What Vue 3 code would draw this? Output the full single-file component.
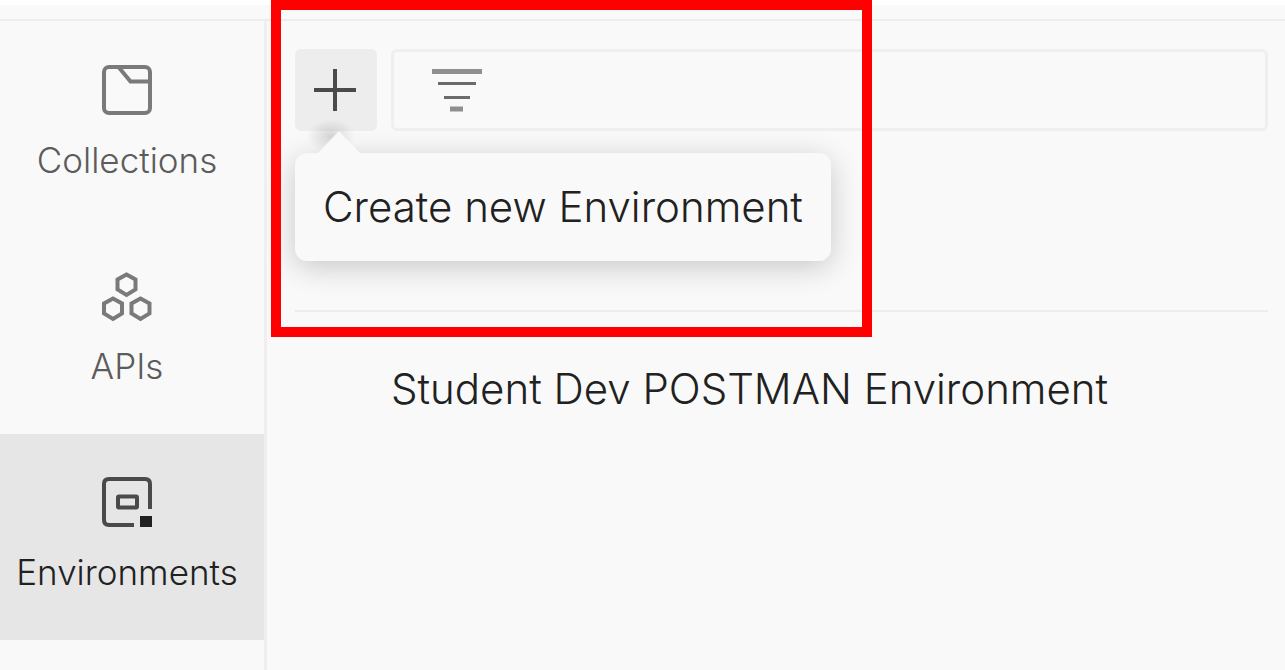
<script setup>
import { ref } from 'vue'

const filter = ref('')
const active = ref('Environments')
const sections = ['Collections', 'APIs', 'Environments']
const environments = ['Student Dev POSTMAN Environment']
</script>

<template>
  <div class="app">
    <header class="topbar"></header>
    <div class="body">
      <nav class="sidebar" aria-label="Workspace">
        <button
          v-for="name in sections"
          :key="name"
          type="button"
          class="section"
          :class="{ active: name === active }"
          @click="active = name"
        >
          <svg v-if="name === 'Collections'" class="icon" viewBox="0 0 52 52" aria-hidden="true">
            <rect x="3" y="3" width="46" height="46" rx="5" />
            <path d="M17.500 3L29.500 17.500H49" />
          </svg>
          <svg v-else-if="name === 'APIs'" class="icon" viewBox="0 0 52 52" aria-hidden="true">
            <path d="M25.500 4.500L34.500 9.500V19.500L25.500 25L16.500 19.500V9.500Z" />
            <path d="M12 28.500L21 33.500V43.500L12 49L3 43.500V33.500Z" />
            <path d="M39.500 28.500L48.500 33.500V43.500L39.500 49L30.500 43.500V33.500Z" />
          </svg>
          <svg v-else class="icon" viewBox="0 0 52 52" aria-hidden="true">
            <path d="M33 49H8Q3 49 3 44V8Q3 3 8 3H44Q49 3 49 8V33" />
            <rect x="17" y="20.500" width="19" height="11" rx="1" />
            <rect class="solid" x="39" y="40" width="12" height="11" />
          </svg>
          <span>{{ name }}</span>
        </button>
      </nav>

      <main class="panel">
        <div class="toolbar">
          <div class="create">
            <button type="button" class="add" aria-label="Create new Environment" aria-describedby="create-tip">
              <svg viewBox="0 0 82 82" aria-hidden="true">
                <path d="M19 41H61M40 20V62" />
              </svg>
            </button>
            <div id="create-tip" class="tooltip" role="tooltip">Create new Environment</div>
          </div>
          <div class="search">
            <svg class="funnel" viewBox="0 0 50 44" aria-hidden="true">
              <path class="wide" d="M0 3.500H50" />
              <path d="M6 15.500H44M12 29.500H38" />
              <path class="wide" d="M18 41H31" />
            </svg>
            <input v-model="filter" type="text" aria-label="Filter environments" />
          </div>
        </div>
        <ul class="list">
          <li v-for="env in environments" :key="env"><a href="#">{{ env }}</a></li>
        </ul>
        <div class="highlight" aria-hidden="true"></div>
      </main>
    </div>
  </div>
</template>

<style>
body {
  background: #f9f9f9;
}
</style>

<style scoped>
.app {
  display: flex;
  flex-direction: column;
  min-height: 100vh;
  box-sizing: border-box;
  overflow: hidden;
  position: relative;
  background: #f9f9f9;
  color: #212121;
  font-family: Inter, "Liberation Sans", sans-serif;
}

.topbar {
  height: 14px;
  border-top: 5px solid #fff;
  border-bottom: 2px solid #ededed;
}

.body {
  flex: 1;
  display: flex;
}

.sidebar {
  flex: none;
  width: 264px;
  padding-top: 1px;
  border-right: 3px solid #efefef;
}

.section {
  display: flex;
  flex-direction: column;
  align-items: center;
  gap: 19px;
  width: 100%;
  height: 206px;
  padding: 42px 10px 0 0;
  border: 0;
  background: transparent;
  color: #5c5c5c;
  font: 300 35px/50px Inter, "Liberation Sans", sans-serif;
  cursor: pointer;
}

.section.active {
  background: #e6e6e6;
  color: #212121;
}

.icon {
  width: 52px;
  height: 52px;
  fill: none;
  stroke: #7a7a7a;
  stroke-width: 4;
}

.active .icon {
  stroke: #4a4a4a;
}

.icon .solid {
  fill: #212121;
  stroke: none;
}

.panel {
  flex: 1;
  min-width: 0;
  padding: 28px 17px 0 28px;
}

.toolbar {
  display: flex;
  gap: 14px;
  padding-bottom: 179px;
  border-bottom: 2px solid #ededed;
}

.create {
  position: relative;
}

.add {
  display: block;
  width: 82px;
  height: 82px;
  padding: 0;
  border: 0;
  border-radius: 6px;
  background: #ededed;
}

.add svg {
  display: block;
  fill: none;
  stroke: #4a4a4a;
  stroke-width: 4;
}

.tooltip {
  position: absolute;
  z-index: 1;
  top: 104px;
  left: 0;
  padding: 28px;
  border-radius: 12px;
  background: #f9f9f9;
  box-shadow: 0 6px 30px rgba(0, 0, 0, 0.2);
  font-size: 42px;
  font-weight: 300;
  line-height: 52px;
  white-space: nowrap;
}

.tooltip::before {
  content: "";
  position: absolute;
  top: -22px;
  left: 22px;
  width: 44px;
  height: 23px;
  background: #f9f9f9;
  clip-path: polygon(50% 0, 100% 100%, 0 100%);
}

.tooltip::after {
  content: "";
  position: absolute;
  z-index: -1;
  top: -34px;
  left: 12px;
  width: 48px;
  height: 34px;
  background: radial-gradient(closest-side, rgba(0, 0, 0, 0.14), rgba(0, 0, 0, 0.07) 50%, transparent);
}

.search {
  flex: 1;
  display: flex;
  align-items: center;
  gap: 20px;
  padding: 0 20px 0 38px;
  border: 3px solid #efefef;
  border-radius: 6px;
}

.funnel {
  flex: none;
  width: 50px;
  height: 44px;
  fill: none;
  stroke: #6b6b6b;
  stroke-width: 3;
}

.funnel .wide {
  stroke: #8f8f8f;
  stroke-width: 5;
}

.search input {
  flex: 1;
  min-width: 0;
  border: 0;
  outline: 0;
  background: transparent;
  color: inherit;
  font: 300 42px/52px Inter, "Liberation Sans", sans-serif;
}

.list {
  margin: 0;
  padding: 51px 0 0 96px;
  list-style: none;
  font-size: 42px;
  font-weight: 300;
  line-height: 52px;
}

.list a {
  color: inherit;
  text-decoration: none;
}

.highlight {
  position: absolute;
  z-index: 2;
  top: 0;
  left: 271px;
  width: 581px;
  height: 317px;
  border: 10px solid #f00;
  pointer-events: none;
}
</style>
